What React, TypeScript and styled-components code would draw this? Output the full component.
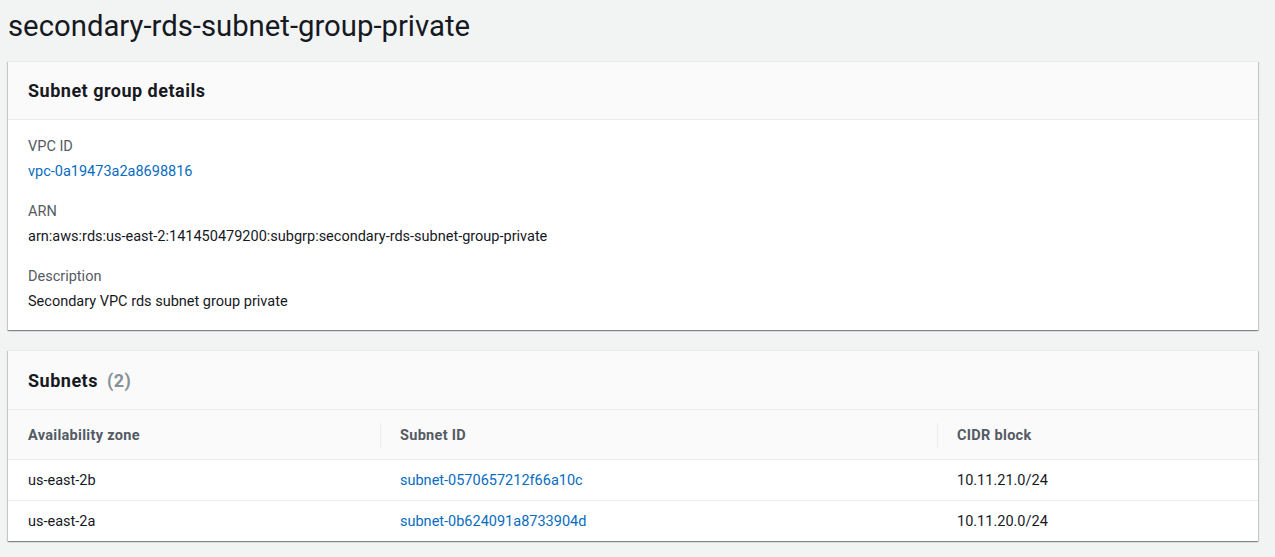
import React from 'react';
import styled, { createGlobalStyle } from 'styled-components';

/** ——— data ——— */
const subnets = [
  { az: 'us-east-2b', id: 'subnet-0570657212f66a10c', cidr: '10.11.21.0/24' },
  { az: 'us-east-2a', id: 'subnet-0b624091a8733904d', cidr: '10.11.20.0/24' },
];

const details = [
  { label: 'VPC ID', value: 'vpc-0a19473a2a8698816', link: true },
  { label: 'ARN', value: 'arn:aws:rds:us-east-2:141450479200:subgrp:secondary-rds-subnet-group-private' },
  { label: 'Description', value: 'Secondary VPC rds subnet group private' },
];

const font = `Roboto, "Liberation Sans", Arial, sans-serif`;

const Global = createGlobalStyle`
  html, body { margin: 0; padding: 0; background: #f2f3f3; }
  body { font-family: ${font}; color: #16191f; }
`;

/** ——— layout ——— */
const Page = styled.main`
  padding: 8px 17px 20px 8px;
  display: flex;
  flex-direction: column;
`;

const Title = styled.h1`
  margin: 0 0 17px;
  font-size: 29.3px;
  line-height: 36px;
  font-weight: 400;
  color: #16191f;
`;

const Panel = styled.section`
  background: #fff;
  border-top: 1px solid #eaeded;
  box-shadow: 0 1px 1px 0 rgba(0, 28, 36, 0.3), 1px 1px 1px 0 rgba(0, 28, 36, 0.15),
    -1px 1px 1px 0 rgba(0, 28, 36, 0.15);
  & + & { margin-top: 20px; }
`;

const PanelHeader = styled.header<{ tall?: boolean }>`
  height: ${({ tall }) => (tall ? '58px' : '57px')};
  display: flex;
  align-items: center;
  padding: 0 20px;
  background: #fafafa;
  border-bottom: 1px solid #eaeded;
`;

const PanelTitle = styled.h2`
  margin: 0;
  font-size: 18px;
  letter-spacing: 0.5px;
  font-weight: 700;
  color: #16191f;
`;

const Count = styled.span`
  margin-left: 9px;
  font-weight: 700;
  color: #879196;
`;

const DetailsBody = styled.div`
  padding: 16px 20px 17px;
  display: grid;
  gap: 18px;
`;

const Item = styled.div`
  display: grid;
  gap: 3px;
  font-size: 14.5px;
  line-height: 22px;
`;

const Label = styled.div`
  color: #545b64;
`;

const Value = styled.div`
  color: #16191f;
`;

const Link = styled.a`
  color: #0a6cbf;
  text-decoration: none;
`;

/** ——— table ——— */
const Row = styled.div<{ head?: boolean }>`
  display: grid;
  grid-template-columns: 372px 557px 1fr;
  height: ${({ head }) => (head ? '49px' : '40px')};
  background: ${({ head }) => (head ? '#fafafa' : '#fff')};
  border-bottom: 1px solid #eaeded;
  &:last-child { border-bottom: none; }
`;

const Cell = styled.div<{ head?: boolean; divider?: boolean }>`
  position: relative;
  display: flex;
  align-items: center;
  padding: ${({ head }) => (head ? '2px 20px 0' : '0 20px')};
  font-size: 14.5px;
  letter-spacing: ${({ head }) => (head ? '0.3px' : '0')};
  font-weight: ${({ head }) => (head ? 700 : 400)};
  color: ${({ head }) => (head ? '#545b64' : '#16191f')};
  ${({ divider }) =>
    divider &&
    `&::before {
      content: '';
      position: absolute;
      left: 0;
      top: 13px;
      bottom: 11px;
      border-left: 1px solid #eaeded;
    }`}
`;

export default function App() {
  return (
    <>
      <Global />
      <Page>
        <Title>secondary-rds-subnet-group-private</Title>

        <Panel>
          <PanelHeader>
            <PanelTitle>Subnet group details</PanelTitle>
          </PanelHeader>
          <DetailsBody>
            {details.map((d) => (
              <Item key={d.label}>
                <Label>{d.label}</Label>
                <Value>{d.link ? <Link href="#">{d.value}</Link> : d.value}</Value>
              </Item>
            ))}
          </DetailsBody>
        </Panel>

        <Panel>
          <PanelHeader tall>
            <PanelTitle>
              Subnets<Count>(2)</Count>
            </PanelTitle>
          </PanelHeader>
          <div>
            <Row head>
              <Cell head>Availability zone</Cell>
              <Cell head divider>Subnet ID</Cell>
              <Cell head divider>CIDR block</Cell>
            </Row>
            {subnets.map((s) => (
              <Row key={s.id}>
                <Cell>{s.az}</Cell>
                <Cell>
                  <Link href="#">{s.id}</Link>
                </Cell>
                <Cell>{s.cidr}</Cell>
              </Row>
            ))}
          </div>
        </Panel>
      </Page>
    </>
  );
}
